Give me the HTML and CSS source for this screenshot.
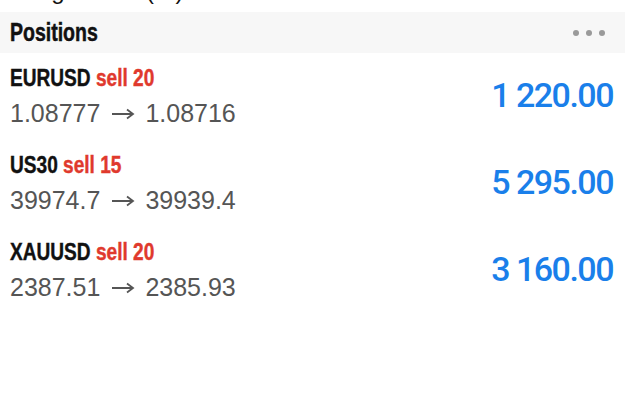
FILE: index.html
```html
<!DOCTYPE html>
<html lang="en">
<head>
    <meta charset="UTF-8">
    <meta name="viewport" content="width=device-width, initial-scale=1.0">
    <title>Positions</title>
    <link rel="stylesheet" href="styles.css">
</head>
<body>
    <div class="prev-strip">
        <span>Margin level (%)</span>
    </div>

    <header class="section-head">
        <h2>Positions</h2>
        <span class="more">
            <i></i><i></i><i></i>
        </span>
    </header>

    <div class="positions">
        <div class="position">
            <div class="info">
                <div class="title"><span class="symbol">EURUSD</span> <span class="side">sell 20</span></div>
                <div class="prices">1.08777<svg class="arrow" viewBox="0 0 24 14"><path d="M1 7H22M16 2.5L22 7L16 11.5"/></svg>1.08716</div>
            </div>
            <div class="profit">1 220.00</div>
        </div>
        <div class="position">
            <div class="info">
                <div class="title"><span class="symbol">US30</span> <span class="side">sell 15</span></div>
                <div class="prices">39974.7<svg class="arrow" viewBox="0 0 24 14"><path d="M1 7H22M16 2.5L22 7L16 11.5"/></svg>39939.4</div>
            </div>
            <div class="profit">5 295.00</div>
        </div>
        <div class="position">
            <div class="info">
                <div class="title"><span class="symbol">XAUUSD</span> <span class="side">sell 20</span></div>
                <div class="prices">2387.51<svg class="arrow" viewBox="0 0 24 14"><path d="M1 7H22M16 2.5L22 7L16 11.5"/></svg>2385.93</div>
            </div>
            <div class="profit">3 160.00</div>
        </div>
    </div>
</body>
</html>
```

FILE: styles.css
```css
:root {
    --head-bg: #f7f7f7;
    --text-color: #111111;
    --muted-color: #555555;
    --sell-color: #e0392d;
    --profit-color: #1a7fea;
    --dots-color: #9a9a9a;
}

body {
    margin: 0;
    padding: 0;
    background: white;
    color: var(--text-color);
    font-family: "Liberation Sans", Arial, sans-serif;
}

.prev-strip {
    height: 12px;
    overflow: hidden;
    padding: 0 10px;
}

.prev-strip span {
    display: block;
    margin-top: -21px;
    font-size: 24px;
    line-height: 24px;
    color: var(--text-color);
}

.section-head {
    height: 41px;
    background: var(--head-bg);
    display: flex;
    align-items: center;
    justify-content: space-between;
    padding: 0 20px 0 10px;
}

/* no condensed face installed, so squeeze the bold one */
.section-head h2 {
    margin: 0;
    font-weight: bold;
    font-size: 25px;
    -webkit-text-stroke: 0.5px currentColor;
    transform: scaleX(0.78);
    transform-origin: left center;
}

.more {
    display: flex;
    gap: 7px;
}

.more i {
    width: 6px;
    height: 6px;
    border-radius: 50%;
    background: var(--dots-color);
}

.position {
    height: 87px;
    display: flex;
    align-items: center;
    justify-content: space-between;
    padding: 0 12px 0 10px;
}

.info {
    align-self: flex-start;
    padding-top: 12px;
}

.title {
    font-weight: bold;
    font-size: 23px;
    line-height: 26px;
    white-space: nowrap;
    -webkit-text-stroke: 0.4px currentColor;
    transform: scaleX(0.83);
    transform-origin: left center;
}

.side {
    color: var(--sell-color);
}

.prices {
    margin-top: 8px;
    font-size: 25px;
    line-height: 28px;
    color: var(--muted-color);
    white-space: nowrap;
}

.arrow {
    width: 24px;
    height: 14px;
    margin: 0 10px 0 11px;
    vertical-align: 1px;
    fill: none;
    stroke: var(--muted-color);
    stroke-width: 1.8;
}

.profit {
    font-family: Roboto, "Liberation Sans", sans-serif;
    font-weight: 500;
    font-size: 34px;
    letter-spacing: -1.5px;
    color: var(--profit-color);
    margin-top: -4px;
}
```
